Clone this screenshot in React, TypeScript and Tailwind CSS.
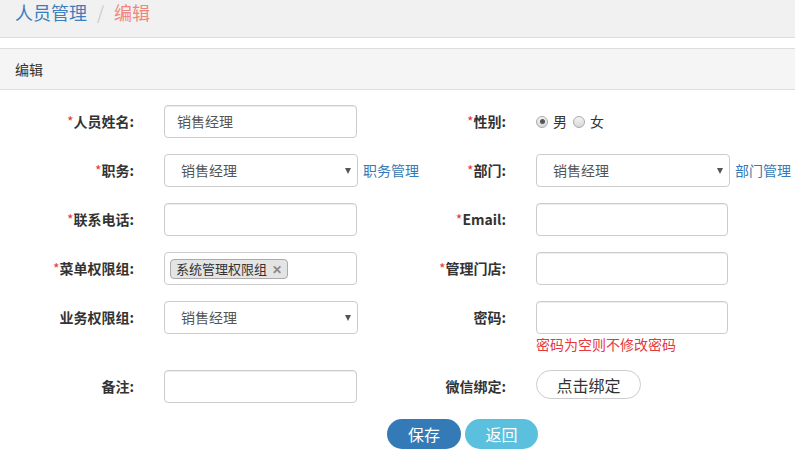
import React from "react";

const font = { fontFamily: '"Microsoft YaHei", "Noto Sans CJK SC", "Open Sans", sans-serif' };

function Label({ text, required = false }: { text: string; required?: boolean }) {
  return (
    <div className="w-[134px] shrink-0 text-right text-[14px] font-bold text-[#333]">
      {required ? <span className="font-normal text-[#e4393c]">*</span> : null}
      {text}:
    </div>
  );
}

function TextInput({ value = "", width = "w-[193px]" }: { value?: string; width?: string }) {
  return (
    <div
      className={`ml-[30px] flex h-[33px] ${width} shrink-0 items-center rounded-[4px] border border-[#ccc] bg-white px-3 text-[14px] text-[#555] shadow-[inset_0_1px_1px_rgba(0,0,0,0.075)]`}
    >
      {value}
    </div>
  );
}

function SelectBox({ value }: { value: string }) {
  return (
    <div className="ml-[30px] flex h-[33px] w-[194px] shrink-0 items-center justify-between rounded-[4px] border border-[#ccc] bg-white pl-4 pr-[6px] text-[14px] text-[#555]">
      <span>{value}</span>
      <span className="h-0 w-0 border-x-[3.5px] border-t-[6px] border-x-transparent border-t-[#555]" />
    </div>
  );
}

function Radio({ checked }: { checked?: boolean }) {
  return (
    <span className="flex h-[12px] w-[12px] items-center justify-center rounded-full border border-[#aaa] bg-gradient-to-b from-[#f4f4f4] to-[#d8d8d8]">
      {checked ? <span className="h-[5px] w-[5px] rounded-full bg-[#555]" /> : null}
    </span>
  );
}

export default function App() {
  return (
    <div className="h-[453px] w-[795px] overflow-hidden bg-white" style={font}>
      <div className="flex h-[38px] items-start border-b border-[#ddd] bg-[#f1f1f1] pl-[15px] pt-[1px] text-[18px] leading-[22px]">
        <span className="text-[#3d7ebf]">人员管理</span>
        <span className="px-[10px] text-[#ccc]">/</span>
        <span className="text-[#f0877c]">编辑</span>
      </div>

      <div className="mt-[10px] flex h-[42px] items-center border-y border-[#ddd] bg-[#f5f5f5] pl-[15px] text-[14px] text-[#333]">
        编辑
      </div>

      <div className="pt-[15px]">
        <div className="flex h-[33px]">
          <div className="flex w-[372px] shrink-0 items-center">
            <Label text="人员姓名" required />
            <TextInput value="销售经理" />
          </div>
          <div className="flex items-center">
            <Label text="性别" required />
            <div className="ml-[30px] flex items-center gap-[5px] text-[14px] text-[#333]">
              <Radio checked />
              <span className="mr-[1px]">男</span>
              <Radio />
              <span>女</span>
            </div>
          </div>
        </div>

        <div className="mt-[16px] flex h-[33px]">
          <div className="flex w-[372px] shrink-0 items-center">
            <Label text="职务" required />
            <SelectBox value="销售经理" />
            <span className="ml-[5px] shrink-0 whitespace-nowrap text-[14px] text-[#337ab7]">职务管理</span>
          </div>
          <div className="flex items-center">
            <Label text="部门" required />
            <SelectBox value="销售经理" />
            <span className="ml-[5px] shrink-0 whitespace-nowrap text-[14px] text-[#337ab7]">部门管理</span>
          </div>
        </div>

        <div className="mt-[16px] flex h-[33px]">
          <div className="flex w-[372px] shrink-0 items-center">
            <Label text="联系电话" required />
            <TextInput />
          </div>
          <div className="flex items-center">
            <Label text="Email" required />
            <TextInput width="w-[192px]" />
          </div>
        </div>

        <div className="mt-[16px] flex h-[33px]">
          <div className="flex w-[372px] shrink-0 items-center">
            <Label text="菜单权限组" required />
            <div className="ml-[30px] flex h-[33px] w-[193px] shrink-0 items-center rounded-[4px] border border-[#ccc] bg-white px-[5px]">
              <span className="flex h-[20px] items-center gap-[5px] rounded-[4px] border border-[#aaa] bg-[#e4e4e4] px-[5px] text-[13px] text-[#333]">
                系统管理权限组
                <span className="text-[12px] font-bold text-[#888]">✕</span>
              </span>
            </div>
          </div>
          <div className="flex items-center">
            <Label text="管理门店" required />
            <TextInput width="w-[192px]" />
          </div>
        </div>

        <div className="mt-[16px] flex">
          <div className="flex h-[33px] w-[372px] shrink-0 items-center">
            <Label text="业务权限组" />
            <SelectBox value="销售经理" />
          </div>
          <div>
            <div className="flex h-[33px] items-center">
              <Label text="密码" />
              <TextInput width="w-[192px]" />
            </div>
            <div className="ml-[164px] text-[14px] leading-[20px] text-[#e4393c]">密码为空则不修改密码</div>
          </div>
        </div>

        <div className="mt-[16px] flex h-[33px]">
          <div className="flex w-[372px] shrink-0 items-center">
            <Label text="备注" />
            <TextInput />
          </div>
          <div className="flex items-start">
            <div className="flex h-[33px] items-center">
              <Label text="微信绑定" />
            </div>
            <button className="ml-[30px] h-[29px] w-[105px] rounded-full border border-[#ccc] bg-white text-[16px] text-[#333]">
              点击绑定
            </button>
          </div>
        </div>

        <div className="mt-[16px] flex pl-[387px]">
          <button className="h-[30px] w-[74px] rounded-full bg-[#337ab7] text-[16px] text-white">保存</button>
          <button className="ml-[4px] h-[30px] w-[73px] rounded-full bg-[#5bc0de] text-[16px] text-white">返回</button>
        </div>
      </div>
    </div>
  );
}
